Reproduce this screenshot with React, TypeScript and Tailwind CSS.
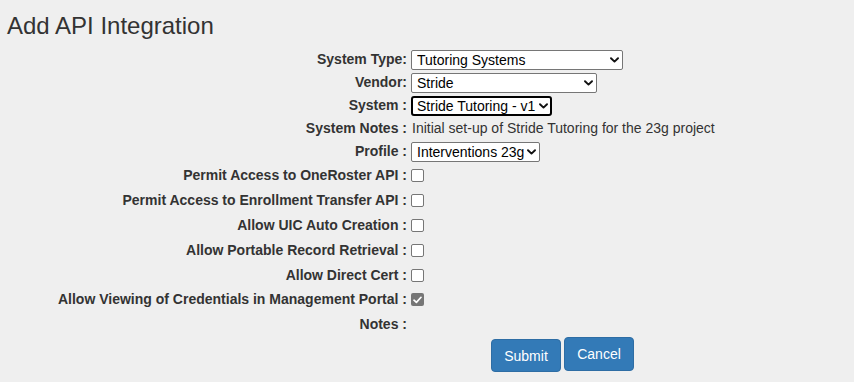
import React from "react";

const font = { fontFamily: '"Liberation Sans", Arial, sans-serif' };

function Chevron() {
  return (
    <svg
      className="pointer-events-none absolute right-[4px] top-1/2 -translate-y-1/2"
      width="9"
      height="6"
      viewBox="0 0 9 6"
      fill="none"
    >
      <path d="M1 1.2 L4.5 4.6 L8 1.2" stroke="#111" strokeWidth="1.9" strokeLinecap="round" strokeLinejoin="round" />
    </svg>
  );
}

function Select({ value, width, focused }: { value: string; width: string; focused?: boolean }) {
  return (
    <div className={`relative ${width} h-[20px]`}>
      <select
        defaultValue={value}
        className={
          focused
            ? "h-full w-full appearance-none rounded-[3px] border-2 border-black bg-white pl-[4px] text-[14px] leading-[16px] text-black outline-none"
            : "h-full w-full appearance-none rounded-[2px] border border-[#767676] bg-white pl-[5px] text-[14px] leading-[18px] text-black outline-none"
        }
        style={font}
      >
        <option>{value}</option>
      </select>
      <Chevron />
    </div>
  );
}

function Box({ checked }: { checked?: boolean }) {
  return checked ? (
    <span className="flex h-[13px] w-[13px] items-center justify-center rounded-[2px] bg-[#767676]">
      <svg width="9" height="8" viewBox="0 0 9 8" fill="none">
        <path d="M1 4.2 L3.4 6.4 L8 1.3" stroke="#fff" strokeWidth="1.7" strokeLinecap="round" strokeLinejoin="round" />
      </svg>
    </span>
  ) : (
    <span className="block h-[13px] w-[13px] rounded-[2px] border border-[#767676] bg-white" />
  );
}

function Row({ label, h, children }: { label: string; h: string; children?: React.ReactNode }) {
  return (
    <div className={`flex ${h} items-center`}>
      <div className="w-[407px] shrink-0 text-right text-[14px] font-bold text-[#333]">{label}</div>
      <div className="ml-[4px] flex items-center text-[14px] text-[#333]">{children}</div>
    </div>
  );
}

export default function App() {
  const checks: [string, boolean, string][] = [
    ["Permit Access to OneRoster API :", false, "h-[25px]"],
    ["Permit Access to Enrollment Transfer API :", false, "h-[25px]"],
    ["Allow UIC Auto Creation :", false, "h-[25px]"],
    ["Allow Portable Record Retrieval :", false, "h-[25px]"],
    ["Allow Direct Cert :", false, "h-[25px]"],
    ["Allow Viewing of Credentials in Management Portal :", true, "h-[23px]"],
  ];
  return (
    <div className="min-h-[382px] w-full bg-[#efefef]" style={font}>
      <div className="h-[48px] pl-[7px] pt-[13px]">
        <h3 className="text-[24px] leading-[26px] font-normal text-[#333]">Add API Integration</h3>
      </div>
      <Row label="System Type:" h="h-[23px]">
        <Select value="Tutoring Systems" width="w-[212px]" />
      </Row>
      <Row label="Vendor:" h="h-[23px]">
        <Select value="Stride" width="w-[186px]" />
      </Row>
      <Row label="System :" h="h-[23px]">
        <Select value="Stride Tutoring - v1" width="w-[141px]" focused />
      </Row>
      <Row label="System Notes :" h="h-[23px]">
        <span className="pl-[1px]">Initial set-up of Stride Tutoring for the 23g project</span>
      </Row>
      <Row label="Profile :" h="h-[23px]">
        <Select value="Interventions 23g" width="w-[129px]" />
      </Row>
      {checks.map(([l, c, h]) => (
        <Row key={l} label={l} h={h}>
          <Box checked={c} />
        </Row>
      ))}
      <Row label="Notes :" h="h-[26px]" />
      <div className="flex items-start gap-[3px] pl-[491px]">
        <button className="mt-[2px] h-[33px] w-[70px] rounded-[4px] border border-[#2e6da4] bg-[#337ab7] pt-[2px] text-[14px] text-white">
          Submit
        </button>
        <button className="h-[34px] w-[70px] rounded-[4px] border border-[#2e6da4] bg-[#337ab7] text-[14px] text-white">
          Cancel
        </button>
      </div>
    </div>
  );
}
